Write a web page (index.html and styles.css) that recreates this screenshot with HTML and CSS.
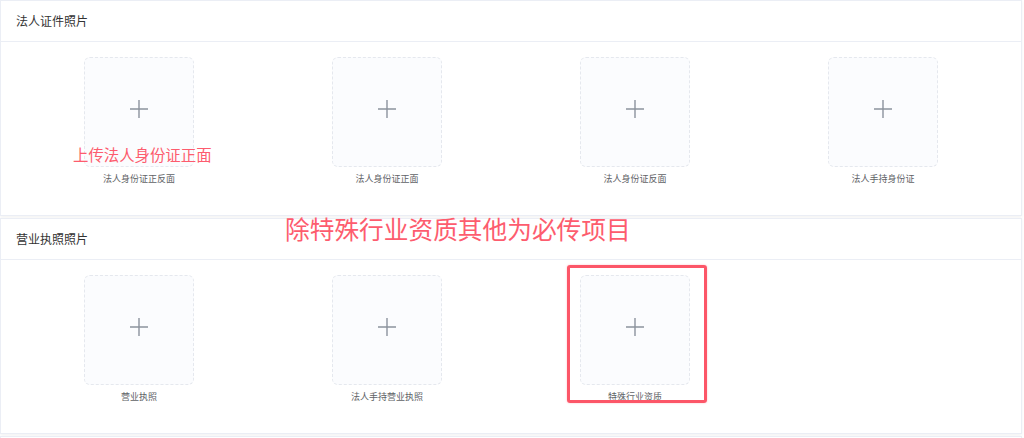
FILE: index.html
```html
<!DOCTYPE html>
<html lang="zh-CN">
<head>
    <meta charset="UTF-8">
    <title>证件照片</title>
    <link rel="stylesheet" href="styles.css">
</head>
<body>
    <div class="page">
        <div class="card">
            <div class="card-header">法人证件照片</div>
            <div class="card-body">
                <div class="upload-item">
                    <div class="upload-box">
                        <svg class="plus" viewBox="0 0 18 18"><path d="M9 0V18M0 9H18"/></svg>
                    </div>
                    <div class="upload-label">法人身份证正反面</div>
                </div>
                <div class="upload-item">
                    <div class="upload-box">
                        <svg class="plus" viewBox="0 0 18 18"><path d="M9 0V18M0 9H18"/></svg>
                    </div>
                    <div class="upload-label">法人身份证正面</div>
                </div>
                <div class="upload-item">
                    <div class="upload-box">
                        <svg class="plus" viewBox="0 0 18 18"><path d="M9 0V18M0 9H18"/></svg>
                    </div>
                    <div class="upload-label">法人身份证反面</div>
                </div>
                <div class="upload-item">
                    <div class="upload-box">
                        <svg class="plus" viewBox="0 0 18 18"><path d="M9 0V18M0 9H18"/></svg>
                    </div>
                    <div class="upload-label">法人手持身份证</div>
                </div>
                <div class="note note-small">上传法人身份证正面</div>
            </div>
        </div>

        <div class="card">
            <div class="card-header">营业执照照片</div>
            <div class="card-body">
                <div class="upload-item">
                    <div class="upload-box">
                        <svg class="plus" viewBox="0 0 18 18"><path d="M9 0V18M0 9H18"/></svg>
                    </div>
                    <div class="upload-label">营业执照</div>
                </div>
                <div class="upload-item">
                    <div class="upload-box">
                        <svg class="plus" viewBox="0 0 18 18"><path d="M9 0V18M0 9H18"/></svg>
                    </div>
                    <div class="upload-label">法人手持营业执照</div>
                </div>
                <div class="upload-item">
                    <div class="upload-box">
                        <svg class="plus" viewBox="0 0 18 18"><path d="M9 0V18M0 9H18"/></svg>
                    </div>
                    <div class="upload-label">特殊行业资质</div>
                    <div class="highlight"></div>
                </div>
            </div>
        </div>

        <div class="card card-next"></div>

        <div class="note note-big">除特殊行业资质其他为必传项目</div>
    </div>
</body>
</html>
```

FILE: styles.css
```css
body {
    margin: 0;
    background-color: #fff;
    font-family: "Noto Sans CJK SC", "Noto Sans", sans-serif;
    color: #333;
}
.page {
    position: relative;
    width: 1022px;
}
.card {
    background-color: #fff;
    border: 1px solid #ebeef5;
    box-shadow: 0 1px 3px rgba(0,0,0,0.06);
    margin-bottom: 2px;
}
.card-header {
    height: 40px;
    line-height: 40px;
    padding: 0 15px;
    font-size: 12px;
    color: #333;
    border-bottom: 1px solid #ebeef5;
}
.card-body {
    position: relative;
    display: grid;
    grid-template-columns: repeat(4, 248px);
    padding: 15px 14px 29px;
}
.upload-item {
    position: relative;
    display: flex;
    flex-direction: column;
    align-items: center;
}
.upload-box {
    width: 108px;
    height: 108px;
    border: 1px dashed #e5e8ee;
    border-radius: 6px;
    background-color: #fbfcfe;
    display: flex;
    align-items: center;
    justify-content: center;
}
.plus {
    width: 18px;
    height: 18px;
    margin-bottom: 6px;
    stroke: #8c939d;
    stroke-width: 1.4;
    fill: none;
}
.upload-label {
    margin-top: 5px;
    height: 14px;
    line-height: 14px;
    font-size: 9px;
    color: #606266;
}
.highlight {
    position: absolute;
    left: 56px;
    top: -10px;
    width: 134px;
    height: 132px;
    border: 3px solid #fc5668;
    border-radius: 3px;
    box-shadow: 0 0 2px rgba(252,86,104,0.4);
}
.card-next {
    height: 6px;
    border-bottom: none;
    margin-bottom: 0;
}
.note {
    position: absolute;
    color: #fd5c6e;
    white-space: nowrap;
}
.note-small {
    left: 72px;
    top: 102px;
    font-size: 15.4px;
    line-height: 20px;
}
.note-big {
    left: 285px;
    top: 213px;
    font-size: 24.7px;
    line-height: 30px;
}
```
